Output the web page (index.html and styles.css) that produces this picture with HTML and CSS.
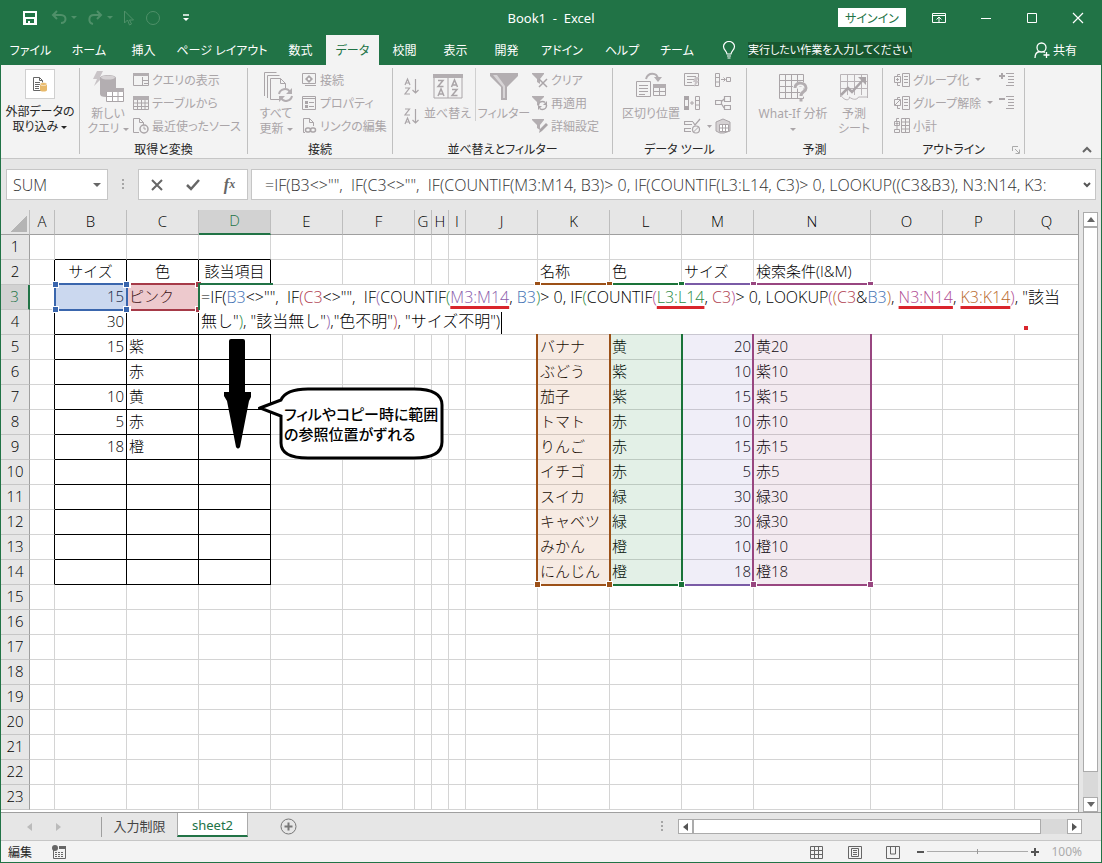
FILE: index.html
```html
<!DOCTYPE html>
<html lang="ja">
<head>
    <meta charset="UTF-8">
    <meta name="viewport" content="width=device-width, initial-scale=1.0">
    <title>Book1 - Excel</title>
    <link rel="stylesheet" href="styles.css">
</head>
<body>
<div class="window">

    <header class="titlebar">
        <div class="quick">
            <button class="save" aria-label="上書き保存"><svg width="14" height="14" viewBox="0 0 14 14"><path d="M0 0h14v14H0zM2 2v4h10V2zM3 8v4h2v-2h2v2h4V8z" fill="#fff" fill-rule="evenodd"/></svg></button>
            <button aria-label="元に戻す"><svg width="26" height="16" viewBox="0 0 26 16"><path d="M6 1L2 5l4 4M2 5h8c6 0 6 8 0 8" fill="none" stroke="#4f9069" stroke-width="2"/><path d="M20 6h6l-3 3z" fill="#4f9069"/></svg></button>
            <button aria-label="やり直し"><svg width="26" height="16" viewBox="0 0 26 16"><path d="M10 1l4 4-4 4M14 5H7c-6 0-6 8-1 9" fill="none" stroke="#4f9069" stroke-width="2"/><path d="M20 6h6l-3 3z" fill="#4f9069"/></svg></button>
            <button aria-label="選択"><svg width="12" height="16" viewBox="0 0 12 16"><path d="M1.500 1v12l3-3 2 5 2-1-2-4h4z" fill="none" stroke="#4f9069"/></svg></button>
            <button aria-label="楕円"><svg width="16" height="16" viewBox="0 0 16 16"><circle cx="8" cy="8" r="6.500" fill="none" stroke="#4f9069"/></svg></button>
            <button aria-label="カスタマイズ"><svg width="8" height="8" viewBox="0 0 8 8"><path d="M1 1h6" stroke="#fff" stroke-width="1.500"/><path d="M1 4h6L4 7z" fill="#fff"/></svg></button>
        </div>
        <div class="title">Book1&nbsp; -&nbsp; Excel</div>
        <div class="window-buttons">
            <button class="signin">サインイン</button>
            <button aria-label="リボンの表示オプション"><svg width="14" height="14" viewBox="0 0 14 14"><path d="M.5 2.500h13v9H.5zM.5 4.500h13M7 11V6M4.500 8.500L7 6l2.500 2.500" fill="none" stroke="#fff"/></svg></button>
            <button aria-label="最小化"><svg width="12" height="12" viewBox="0 0 12 12"><path d="M1 6.500h10" stroke="#fff"/></svg></button>
            <button aria-label="最大化"><svg width="12" height="12" viewBox="0 0 12 12"><path d="M1.500 1.500h9v9h-9z" fill="none" stroke="#fff"/></svg></button>
            <button aria-label="閉じる"><svg width="12" height="12" viewBox="0 0 12 12"><path d="M1 1l10 10M11 1L1 11" stroke="#fff" stroke-width="1.200"/></svg></button>
        </div>
    </header>

    <nav class="tabs">
        <div class="tab-list">
            <button>ファイル</button>
            <button>ホーム</button>
            <button>挿入</button>
            <button>ページ レイアウト</button>
            <button>数式</button>
            <button class="active">データ</button>
            <button>校閲</button>
            <button>表示</button>
            <button>開発</button>
            <button>アドイン</button>
            <button>ヘルプ</button>
            <button>チーム</button>
        </div>
        <button class="tell-me">
            <svg width="14" height="18" viewBox="0 0 14 18"><path d="M5 13c0-3-3.500-4-3.500-7.500a5.500 5 0 0 1 11 0C12.500 9 9 10 9 13zM5 15h4M5.500 17h3" fill="none" stroke="#fff" stroke-width="1.200"/></svg>
            <span>実行したい作業を入力してください</span>
        </button>
        <button class="share">
            <svg width="16" height="17" viewBox="0 0 16 17"><circle cx="7.500" cy="5.500" r="4.500" fill="none" stroke="#fff" stroke-width="1.300"/><path d="M1 16c0-4 2-6 4.500-6.500M9 9.500l2 1M12.500 10v6M9.500 13h6" fill="none" stroke="#fff" stroke-width="1.300"/></svg>
            共有
        </button>
    </nav>

    <section class="ribbon">
        <div class="group g-external">
            <div class="group-body">
                <button class="big enabled">
                    <span class="icon-box"><svg width="16" height="16" viewBox="0 0 16 16"><path d="M1.500 1.500h6l3 3v10h-9z" fill="#fff" stroke="#666"/><path d="M7.500 1.500v3h3M3 6.500h5M3 8.500h5M3 10.500h4M3 12.500h4" fill="none" stroke="#666"/><path d="M8 8v6c0 2 7 2 7 0V8z" fill="#e8b96a"/><ellipse cx="11.500" cy="8" rx="3.500" ry="1.500" fill="#e8b96a" stroke="#fff" stroke-width=".6"/></svg></span>
                    外部データの<br>取り込み <i class="caret"></i>
                </button>
            </div>
        </div>

        <div class="group g-query">
            <div class="group-body">
                <button class="big">
                    <svg width="34" height="34" viewBox="0 0 34 34"><path d="M6 1h6L9 7h3L3 16l3-7H2z" fill="#c9c4c7"/><path d="M9 8c0-4 16-4 16 0v10H15v9c-4 0-6-1-6-3z" fill="#b3aeb1"/><ellipse cx="17" cy="7.500" rx="7" ry="2" fill="#d6d2d4"/><path d="M15.500 18.500h17v13h-17z" fill="#fff" stroke="#aaa5a8"/><path d="M15 18h18v4H15z" fill="#b3aeb1"/><path d="M16 26.500h16M21.500 22v9M27 22v9" stroke="#aaa5a8"/></svg>
                    新しい<br>クエリ <i class="caret"></i>
                </button>
                <div class="stack">
                    <button><svg width="16" height="16" viewBox="0 0 16 16"><path d="M.5 1.500h15v12H.5zM9.500 5v8M9.500 8.500h6M11 11.500h4" fill="none" stroke="#aaa5a8"/><path d="M0 1h16v3H0z" fill="#b3aeb1"/></svg>クエリの表示</button>
                    <button><svg width="16" height="16" viewBox="0 0 16 16"><path d="M.5 1.500h15v13H.5zM.5 8h15M.5 11.500h15M4.500 4v10M8.500 4v10M12 4v10" fill="none" stroke="#aaa5a8"/><path d="M0 1h16v4H0z" fill="#b3aeb1"/></svg>テーブルから</button>
                    <button><svg width="16" height="16" viewBox="0 0 16 16"><path d="M6 14.500H.5V.5h6l4 4V7M6.500.5v4h4" fill="none" stroke="#aaa5a8"/><circle cx="11" cy="11" r="4" fill="#f3f3f3" stroke="#aaa5a8" stroke-width="1.500"/><path d="M11 8.500V11h2" fill="none" stroke="#aaa5a8"/></svg>最近使ったソース</button>
                </div>
            </div>
            <div class="group-label">取得と変換</div>
        </div>

        <div class="group g-connect">
            <div class="group-body">
                <button class="big">
                    <svg width="34" height="34" viewBox="0 0 34 34"><path d="M5.500 26V2.500h12M8.500 28V5.500h12" fill="none" stroke="#aaa5a8"/><path d="M21 29.500h-9.500v-21h10l5 5V18M21.500 8.500v5h5" fill="none" stroke="#aaa5a8"/><path d="M20 24c1-5 8-7 11-2M33 26c-1 5-8 7-11 2" fill="none" stroke="#b3aeb1" stroke-width="2"/><path d="M33 18v6h-6zM20 32v-6h6z" fill="#b3aeb1"/></svg>
                    すべて<br>更新 <i class="caret"></i>
                </button>
                <div class="stack">
                    <button><svg width="16" height="16" viewBox="0 0 16 16"><path d="M1.500 1.500h13v10h-13zM4 13.500h11" fill="none" stroke="#aaa5a8"/><path d="M8 3l4 4-4 4-4-4z" fill="#aaa5a8"/><path d="M8 5.500L9.500 7 8 8.500 6.500 7z" fill="#fff"/></svg>接続</button>
                    <button><svg width="16" height="16" viewBox="0 0 16 16"><path d="M1.500 1.500h13v13h-13zM1.500 3.500h13M8 7.500h5M8 11.500h5" fill="none" stroke="#aaa5a8"/><path d="M4 6h3v3H4zM4 10h3v3H4z" fill="#aaa5a8"/></svg>プロパティ</button>
                    <button><svg width="16" height="16" viewBox="0 0 16 16"><path d="M4 14.500H2.500V.5h6l4 4V8M8.500.5v4h4" fill="none" stroke="#aaa5a8"/><rect x="4.500" y="10" width="5" height="4" rx="2" fill="none" stroke="#aaa5a8" stroke-width="1.500"/><rect x="9.500" y="10" width="5" height="4" rx="2" fill="none" stroke="#aaa5a8" stroke-width="1.500"/></svg>リンクの編集</button>
                </div>
            </div>
            <div class="group-label">接続</div>
        </div>

        <div class="group g-sort">
            <div class="group-body">
                <div class="sort-pair">
                    <button aria-label="昇順"><svg width="16" height="18" viewBox="0 0 16 18"><path d="M1 8l2.500-6L6 8M2 6h3M1 11h4.500L1 17h5M11.500 2v14M8.500 13l3 3 3-3" fill="none" stroke="#aaa5a8" stroke-width="1.200"/></svg></button>
                    <button aria-label="降順"><svg width="16" height="18" viewBox="0 0 16 18"><path d="M1 2h4.500L1 8h5M1 17l2.500-6L6 17M2 15h3M11.500 2v14M8.500 13l3 3 3-3" fill="none" stroke="#aaa5a8" stroke-width="1.200"/></svg></button>
                </div>
                <button class="big sort">
                    <svg width="30" height="34" viewBox="0 0 30 34"><path d="M1 5h28v23H1zM15 8v20" fill="none" stroke="#aaa5a8"/><path d="M0 4h30v4H0z" fill="#b3aeb1"/><path d="M5 10.500h5L5 16.500h5.500M5 26l3-7 3 7M6 24h4M18.500 17l3-7 3 7M19.500 15h4M19 19.500h5l-5 6h5.500" fill="none" stroke="#aaa5a8" stroke-width="1.500"/></svg>
                    並べ替え
                </button>
                <button class="big filter">
                    <svg width="30" height="34" viewBox="0 0 30 34"><path d="M1 3h28v3L18 17v13h-6V17L1 6z" fill="#b3aeb1"/><path d="M4 5h4l8 11v12h-2V17z" fill="#d8d5d7"/></svg>
                    フィルター
                </button>
                <div class="stack">
                    <button><svg width="16" height="16" viewBox="0 0 16 16"><path d="M0 1h12v1L8 7v5L5 10V7L0 2z" fill="#b3aeb1"/><path d="M7 7l8 8M15 7l-8 8" stroke="#aaa5a8" stroke-width="1.500"/></svg>クリア</button>
                    <button><svg width="16" height="16" viewBox="0 0 16 16"><path d="M0 1h12v1L8 6v6L5 10V7L0 2z" fill="#b3aeb1"/><circle cx="10.500" cy="10.500" r="4" fill="#f3f3f3" stroke="#aaa5a8" stroke-width="1.500" stroke-dasharray="9 3"/><path d="M15 6v4h-4zM6 15v-4h4z" fill="#aaa5a8"/></svg>再適用</button>
                    <button><svg width="16" height="16" viewBox="0 0 16 16"><path d="M0 1h12v1L8 7v5L5 10V7L0 2z" fill="#b3aeb1"/><path d="M7 15l1-4 6-6 2 2-6 6z" fill="#aaa5a8"/></svg>詳細設定</button>
                </div>
            </div>
            <div class="group-label">並べ替えとフィルター</div>
        </div>

        <div class="group g-tools">
            <div class="group-body">
                <button class="big">
                    <svg width="32" height="34" viewBox="0 0 32 34"><path d="M1.500 11.500h14v15h-14zM4 15.500h9M4 18.500h9M4 21.500h9M4 24.500h6M18.500 14.500h12v11h-12zM24.500 15v10M19 21.500h11" fill="none" stroke="#aaa5a8"/><path d="M18 14h13v4H18z" fill="#b3aeb1"/><path d="M11 9c2-7 11-7 12 0" fill="none" stroke="#b3aeb1" stroke-width="2"/><path d="M19 7h8l-4 5z" fill="#b3aeb1"/></svg>
                    区切り位置
                </button>
                <div class="stack icons">
                    <button aria-label="フラッシュ フィル"><svg width="16" height="16" viewBox="0 0 16 16"><path d="M.5 1.500h14v12H.5zM3 4.500h9M3 7.500h7M3 10.500h5" fill="none" stroke="#aaa5a8"/><path d="M11 5h4l-2 4h2l-5 6 1-5H9z" fill="#c9c4c7"/></svg></button>
                    <button aria-label="重複の削除"><svg width="16" height="16" viewBox="0 0 16 16"><path d="M0 1h5v4H0zM0 11h5v4H0z" fill="#aaa5a8"/><path d="M.5 1.500h4v13h-4zM11.500 1.500h4v13h-4zM11.500 5.500h4M11.500 10h4M6 8h4M8 6v4" fill="none" stroke="#aaa5a8"/></svg></button>
                    <button aria-label="データの入力規則"><svg width="28" height="16" viewBox="0 0 28 16"><path d="M9 3.500H.5v3H8M7 10.500H.5v3H7M9 4l2 3 5-6" fill="none" stroke="#aaa5a8" stroke-width="1.200"/><circle cx="12" cy="11.500" r="3.500" fill="none" stroke="#aaa5a8" stroke-width="1.200"/><path d="M9.500 14l5-5" stroke="#aaa5a8"/><path d="M23 7h5l-2.500 3z" fill="#aaa5a8"/></svg></button>
                </div>
                <div class="stack icons">
                    <button aria-label="統合"><svg width="16" height="16" viewBox="0 0 16 16"><path d="M.5 1.500h4v13h-4zM.5 5.500h4M.5 10h4M6 7.500h4M8.500 5.500l2 2-2 2M11.500 5.500h4v4h-4z" fill="none" stroke="#aaa5a8"/></svg></button>
                    <button aria-label="リレーションシップ"><svg width="16" height="16" viewBox="0 0 16 16"><path d="M.5 5.500h6v4h-6zM9.500 1.500h6v5h-6zM9.500 10.500h6v4h-6zM6 7l3-3M6 8l3 5" fill="none" stroke="#aaa5a8" stroke-width="1.200"/></svg></button>
                    <button aria-label="データ モデルの管理"><svg width="16" height="16" viewBox="0 0 16 16"><path d="M1 13V4l7-3 7 3v9l-6 2H5z" fill="#d6d2d4" stroke="#aaa5a8"/><path d="M4.500 6.500h9v7h-9zM4.500 10h9M7.500 6.500v7M10.500 6.500v7" fill="#fff" stroke="#aaa5a8"/></svg></button>
                </div>
            </div>
            <div class="group-label">データ ツール</div>
        </div>

        <div class="group g-forecast">
            <div class="group-body">
                <button class="big">
                    <svg width="30" height="34" viewBox="0 0 30 34"><path d="M1.500 4.500h24v24h-24zM7.500 5v23M13.500 5v23M19.500 5v23M2 10.500h23M2 16.500h23M2 22.500h23" fill="none" stroke="#aaa5a8"/><path d="M17 19c0-7 11-6 11 0 0 4-5 3-5 8" fill="none" stroke="#f3f3f3" stroke-width="5"/><path d="M17 18c0-7 11-6 11 0 0 4-5 3-5 8M23 28.500v3" fill="none" stroke="#b3aeb1" stroke-width="3"/></svg>
                    What-If 分析<br><i class="caret"></i>
                </button>
                <button class="big forecast-sheet">
                    <svg width="30" height="34" viewBox="0 0 30 34"><path d="M1.500 27V4.500h27V28M1.500 25c4 6 9 6 9 2 3 3 8 3 9 0h9M8.500 5v20M15.500 5v20M22.500 5v20M2 11.500h26M2 18.500h26" fill="none" stroke="#b9b4b7"/><path d="M2 25l7-7 4 4L24 10" fill="none" stroke="#aaa5a8" stroke-width="2.500"/><path d="M19 7h8v8z" fill="#aaa5a8"/></svg>
                    予測<br>シート
                </button>
            </div>
            <div class="group-label">予測</div>
        </div>

        <div class="group g-outline">
            <div class="group-body">
                <div class="stack">
                    <button><svg width="16" height="16" viewBox="0 0 16 16"><path d="M6 2.500H3.500v2M3.500 11v2.500H6M.5 4.500h6v6h-6zM2 7.500h3M3.500 6v3M8.500 1.500h7v13h-7zM10 4.500h4M10 7.500h4M10 10.500h4" fill="none" stroke="#aaa5a8"/></svg>グループ化 <i class="caret"></i></button>
                    <button><svg width="16" height="16" viewBox="0 0 16 16"><path d="M6 2.500H3.500v2M3.500 11v2.500H6M.5 4.500h6v6h-6zM1 10l5-5M8.500 1.500h7v13h-7zM10 4.500h4M10 7.500h4M10 10.500h4" fill="none" stroke="#aaa5a8"/></svg>グループ解除 <i class="caret"></i></button>
                    <button><svg width="16" height="16" viewBox="0 0 16 16"><path d="M5 .5H2.500v3M.5 3.500h5v4h-5zM1.500 5.500h3M3 4v3M3 8v3M.5 11.500h5v3h-5zM7.500.5h8v14h-8zM11.500 1v14M8 4h7M8 7.500h7M8 11h7" fill="none" stroke="#aaa5a8"/></svg>小計</button>
                </div>
                <div class="stack icons">
                    <button aria-label="詳細データの表示"><svg width="16" height="16" viewBox="0 0 16 16"><path d="M0 4h6M3 1v6" stroke="#aaa5a8" stroke-width="2"/><path d="M7 1.500h8M9 4.500h6M9 7.500h6M9 10.500h6M7 13.500h8" stroke="#aaa5a8"/></svg></button>
                    <button aria-label="詳細を表示しない"><svg width="16" height="16" viewBox="0 0 16 16"><path d="M0 4h6" stroke="#aaa5a8" stroke-width="2"/><path d="M7 1.500h8M9 4.500h6M9 7.500h6M9 10.500h6M7 13.500h8" stroke="#aaa5a8"/></svg></button>
                </div>
            </div>
            <div class="group-label">アウトライン
                <svg class="launcher" width="8" height="8" viewBox="0 0 8 8"><path d="M.5 5V.5H6M3 3l4 4M7.500 3.500v4h-4" fill="none" stroke="#aaa"/></svg>
            </div>
        </div>
        <button class="collapse" aria-label="リボンを折りたたむ"><svg width="10" height="8" viewBox="0 0 10 8"><path d="M1 6l4-4 4 4" fill="none" stroke="#666" stroke-width="2"/></svg></button>
    </section>

    <section class="formula-row">
        <div class="name-box">
            <input type="text" value="SUM" aria-label="名前ボックス">
            <i class="caret"></i>
        </div>
        <span class="dots"></span>
        <div class="formula-buttons">
            <button aria-label="キャンセル"><svg width="12" height="12" viewBox="0 0 12 12"><path d="M1 1l10 10M11 1L1 11" stroke="#666" stroke-width="2"/></svg></button>
            <button aria-label="入力"><svg width="14" height="12" viewBox="0 0 14 12"><path d="M1 6l4 4 8-9" fill="none" stroke="#666" stroke-width="2.500"/></svg></button>
            <button class="fx" aria-label="関数の挿入">f<small>x</small></button>
        </div>
        <div class="formula-box">
            <input type="text" aria-label="数式バー" value='=IF(B3&lt;&gt;"",&nbsp; IF(C3&lt;&gt;"",&nbsp; IF(COUNTIF(M3:M14, B3)&gt; 0, IF(COUNTIF(L3:L14, C3)&gt; 0, LOOKUP((C3&amp;B3), N3:N14, K3:'>
            <svg width="8" height="8" viewBox="0 0 8 8"><path d="M1 2l3 3 3-3" fill="none" stroke="#555" stroke-width="2"/></svg>
        </div>
    </section>

    <main class="workspace">
        <div class="sheet">
            <table>
                <colgroup>
                    <col class="c-head"><col class="c-a"><col><col><col><col><col>
                    <col class="c-thin"><col class="c-thin"><col class="c-thin">
                    <col><col><col><col><col class="c-n"><col><col><col class="c-rest">
                </colgroup>
                <thead><tr id="letters"></tr></thead>
                <tbody id="rows"></tbody>
            </table>

            <div class="range r-b"><b></b><b></b><b></b><b></b></div>
            <div class="range r-c"><b></b><b></b><b></b><b></b></div>
            <div class="range r-m"></div>
            <div class="range r-l"><b></b><b></b><b></b><b></b></div>
            <div class="range r-k"><b></b><b></b><b></b><b></b></div>
            <div class="range r-n"><b></b><b></b><b></b><b></b></div>

            <div class="editor" contenteditable="true" spellcheck="false" role="textbox" aria-label="D3">=IF(<span class="blue">B3</span>&lt;&gt;"",&nbsp; IF<span class="red">(C3</span>&lt;&gt;"",&nbsp; IF<span class="purple">(</span>COUNTIF<span class="green">(</span><span class="purple mark">M3:M14</span>, <span class="blue">B3</span><span class="green">)</span>&gt; 0, IF<span class="green">(</span>COUNTIF<span class="pink">(</span><span class="green mark">L3:L14</span>, <span class="red">C3</span><span class="pink">)</span>&gt; 0, LOOKUP<span class="pink">(</span><span class="brown">(</span><span class="red">C3</span>&amp;<span class="blue">B3</span><span class="brown">)</span>, <span class="pink mark">N3:N14</span>, <span class="brown mark">K3:K14</span><span class="pink">)</span>, "該当<br>無し"<span class="green">)</span>, "該当無し"<span class="purple">)</span>,"色不明"<span class="red">)</span>, "サイズ不明")<span class="cursor"></span></div>
            <span class="pen-dot"></span>

            <svg class="arrow" width="28" height="112" viewBox="0 0 28 112"><path d="M5 3q0-2 2-2h12q2 0 2 2v51h6v5l-2 4-9 46q-2 3-4 0L3 63 0 58v-4h5z"/></svg>
            <div class="callout">
                <svg width="186" height="74" viewBox="0 0 186 74"><path d="M2 21L23 13C26 6 36 2 50 2H156C174 2 184 7 184 18V55C184 66 174 71 156 71H50C32 71 23 66 23 56V29Z" fill="#fff" stroke="#000" stroke-width="3"/></svg>
                <p>フィルやコピー時に範囲<br>の参照位置がずれる</p>
            </div>
        </div>
        <div class="scroll-v">
            <button aria-label="上へ"><svg width="8" height="5" viewBox="0 0 8 5"><path d="M0 5l4-5 4 5z" fill="#666"/></svg></button>
            <span class="thumb"></span>
            <button aria-label="下へ"><svg width="8" height="5" viewBox="0 0 8 5"><path d="M0 0l4 5 4-5z" fill="#666"/></svg></button>
        </div>
    </main>

    <div class="sheet-bar">
        <div class="sheet-nav">
            <button aria-label="前のシート"><svg width="5" height="8" viewBox="0 0 5 8"><path d="M5 0v8L0 4z" fill="#bbb"/></svg></button>
            <button aria-label="次のシート"><svg width="5" height="8" viewBox="0 0 5 8"><path d="M0 0v8l5-4z" fill="#bbb"/></svg></button>
        </div>
        <button class="sheet-tab">入力制限</button>
        <button class="sheet-tab current">sheet2</button>
        <button class="add" aria-label="新しいシート"><svg width="17" height="17" viewBox="0 0 17 17"><circle cx="8.500" cy="8.500" r="7.500" fill="none" stroke="#777"/><path d="M8.500 4.500v8M4.500 8.500h8" stroke="#777" stroke-width="2"/></svg></button>
        <span class="dots"></span>
        <div class="scroll-h">
            <button aria-label="左へ"><svg width="5" height="8" viewBox="0 0 5 8"><path d="M5 0v8L0 4z" fill="#555"/></svg></button>
            <span class="thumb"></span>
            <button aria-label="右へ"><svg width="5" height="8" viewBox="0 0 5 8"><path d="M0 0v8l5-4z" fill="#555"/></svg></button>
        </div>
    </div>

    <footer class="status">
        <span>編集</span>
        <svg class="macro" width="14" height="14" viewBox="0 0 14 14"><path d="M1.500 4v9.500h12v-10H7" fill="none" stroke="#666"/><path d="M7 1h7v3H7z" fill="#666"/><circle cx="3" cy="3" r="3" fill="#666"/><path d="M3 7.500h9M3 9.500h9M3 11.500h9" stroke="#666" stroke-dasharray="2 1"/></svg>
        <div class="views">
            <button aria-label="標準"><svg width="14" height="14" viewBox="0 0 14 14"><path d="M.5 1.500h12v12H.5zM4.500 1v12M8.500 1v12M.5 5.500h12M.5 9.500h12" fill="none" stroke="#666"/></svg></button>
            <button aria-label="ページ レイアウト"><svg width="14" height="14" viewBox="0 0 14 14"><path d="M.5 1.500h13v12H.5zM3.500 3.500h7v8h-7zM5 5.500h4M5 7.500h4M5 9.500h4" fill="none" stroke="#666"/></svg></button>
            <button aria-label="改ページ プレビュー"><svg width="14" height="14" viewBox="0 0 14 14"><path d="M.5 1.500h13v12H.5zM4.500 1v8h5V1" fill="none" stroke="#666"/></svg></button>
        </div>
        <div class="zoom">
            <button aria-label="縮小"><svg width="7" height="8" viewBox="0 0 7 8"><path d="M0 4h7" stroke="#555" stroke-width="2"/></svg></button>
            <input type="range" min="10" max="190" value="100" aria-label="ズーム">
            <button aria-label="拡大"><svg width="8" height="8" viewBox="0 0 8 8"><path d="M0 4h8M4 0v8" stroke="#555" stroke-width="2"/></svg></button>
        </div>
        <span class="percent">100%</span>
    </footer>
</div>
<script src="script.js"></script>
</body>
</html>
```
FILE: styles.css
```css
* {
    box-sizing: border-box;
}
body {
    margin: 0;
    font-family: "Noto Sans", "Noto Sans CJK JP", sans-serif;
    font-size: 12px;
    color: #262626;
    font-feature-settings: "palt";
}
button, input {
    font: inherit;
    font-feature-settings: inherit;
    color: inherit;
    background: none;
    border: none;
    padding: 0;
    margin: 0;
}
button {
    display: inline-flex;
    align-items: center;
    justify-content: center;
    white-space: nowrap;
}
input {
    min-width: 0;
    outline: none;
}
svg {
    flex: none;
    display: block;
}
.window {
    display: flex;
    flex-direction: column;
    height: 100vh;
    border: 1px solid #217346;
    border-top: none;
    background: #e6e6e6;
    overflow: hidden;
}
.caret {
    display: inline-block;
    border: 3px solid transparent;
    border-top-color: currentColor;
    border-bottom: none;
    vertical-align: middle;
}
.dots {
    width: 2px;
    height: 11px;
    background: repeating-linear-gradient(#a6a6a6 0 2px, transparent 2px 4px);
}

/* title bar */
.titlebar {
    display: grid;
    grid-template-columns: 1fr auto 1fr;
    align-items: center;
    height: 35px;
    background: #217346;
    color: #fff;
}
.quick {
    display: flex;
    align-items: center;
    gap: 10px;
    padding-left: 22px;
}
.quick .save {
    margin-right: 4px;
}
.quick button:last-child {
    margin-left: 11px;
}
.title {
    font-size: 13px;
}
.window-buttons {
    display: flex;
    justify-content: flex-end;
    align-items: center;
    gap: 34px;
    padding-right: 17px;
}
.window-buttons .signin {
    width: 68px;
    height: 19px;
    margin-right: -8px;
    background: #fff;
    color: #217346;
}

/* ribbon tabs */
.tabs {
    display: flex;
    height: 30px;
    background: #217346;
    color: #fff;
}
.tab-list {
    display: grid;
    grid-template-columns: 59px 58px 51px 106px 51px 53px 51px 51px 51px 60px 60px 50px;
}
.tab-list .active {
    background: #f3f3f3;
    color: #217346;
}
.tell-me {
    gap: 12px;
    margin-left: 20px;
    font-size: 11px;
}
.tell-me span {
    background: #17572f;
    line-height: 16px;
}
.share {
    gap: 3px;
    margin-left: auto;
    padding-right: 24px;
}

/* ribbon */
.ribbon {
    display: flex;
    height: 94px;
    padding: 3px 0 4px;
    background: #f3f3f3;
    border-bottom: 1px solid #c6c6c6;
}
.group {
    display: flex;
    flex-direction: column;
    border-right: 1px solid #c0c0c0;
}
.group-body {
    display: flex;
    flex: 1;
    min-height: 0;
    color: #aaa5a8;
}
.group-label {
    position: relative;
    height: 14px;
    line-height: 20px;
    text-align: center;
}
.launcher {
    position: absolute;
    right: 4px;
    bottom: 0;
}
.g-external {
    width: 79px;
}
.g-query {
    width: 168px;
}
.g-connect {
    width: 145px;
}
.g-sort {
    width: 220px;
}
.g-tools {
    width: 134px;
}
.g-forecast {
    width: 136px;
}
.g-outline {
    width: 142px;
}
.big {
    display: block;
    flex: none;
    align-self: flex-start;
    padding-top: 2px;
    line-height: 15px;
    text-align: center;
}
.big svg {
    margin: 0 auto 2px;
}
.big.enabled {
    width: 78px;
    color: #262626;
    padding-top: 1px;
}
.icon-box {
    display: flex;
    align-items: center;
    justify-content: center;
    width: 30px;
    height: 30px;
    margin: 0 auto 5px;
    border: 1px solid #d0d0d0;
    background: #fff;
}
.big .icon-box svg {
    margin: 0;
}
.stack {
    display: flex;
    flex-direction: column;
}
.stack button {
    justify-content: flex-start;
    gap: 3px;
    height: 23px;
}
.stack .caret {
    margin-left: 3px;
}
.g-query .big, .g-connect .big {
    width: 44px;
    margin: 0 3px 0 6px;
}
.g-sort .group-body {
    padding-left: 11px;
}
.sort-pair {
    display: flex;
    flex-direction: column;
    gap: 12px;
    padding-top: 9px;
}
.big.sort {
    width: 56px;
    border-right: 1px solid #d0d0d0;
}
.big.filter {
    width: 56px;
}
.g-tools .group-body {
    padding-left: 8px;
}
.g-tools .big {
    width: 60px;
    margin-right: 3px;
}
.g-tools .icons {
    width: 35px;
}
.g-forecast .group-body {
    padding-left: 8px;
}
.g-forecast .big {
    width: 76px;
}
.g-forecast .forecast-sheet {
    width: 46px;
}
.g-outline .stack {
    width: 106px;
    padding-left: 11px;
}
.g-outline .icons {
    width: 30px;
    padding-left: 10px;
}
.collapse {
    align-self: flex-end;
    margin: 0 9px 0 auto;
}

/* formula bar */
.formula-row {
    display: flex;
    align-items: center;
    height: 51px;
    padding: 0 5px;
    color: #333;
    font-family: "Open Sans", "Noto Sans CJK JP", sans-serif;
    font-size: 16px;
    font-weight: 300;
}
.name-box, .formula-buttons, .formula-box {
    display: flex;
    align-items: center;
    height: 31px;
    border: 1px solid #c6c6c6;
    background: #fff;
}
.name-box {
    width: 102px;
    padding: 0 6px;
}
.name-box input {
    flex: 1;
}
.name-box .caret {
    border-width: 4px;
    border-bottom: none;
    color: #666;
}
.formula-row .dots {
    margin: 0 14px;
}
.formula-buttons {
    width: 110px;
    justify-content: space-around;
    margin-right: 3px;
}
.fx {
    font-family: "Liberation Serif", serif;
    font-style: italic;
    font-weight: bold;
    color: #666;
}
.fx small {
    font-size: 12px;
}
.formula-box {
    flex: 1;
    padding: 0 4px 0 13px;
}
.formula-box input {
    flex: 1;
}

/* grid */
.workspace {
    display: flex;
    flex: 1;
    min-height: 0;
}
.sheet {
    position: relative;
    flex: 1;
    overflow: hidden;
    border-right: 1px solid #9f9f9f;
    background: #fff;
    font-family: "Open Sans", "Noto Sans CJK JP", sans-serif;
    font-size: 15px;
    font-weight: 300;
    font-feature-settings: normal;
    color: #000;
}
table {
    width: 100%;
    table-layout: fixed;
    border-collapse: separate;
    border-spacing: 0;
}
col {
    width: 72px;
}
.c-head {
    width: 29px;
}
.c-a {
    width: 25px;
}
.c-thin {
    width: 17px;
}
.c-n {
    width: 117px;
}
.c-rest {
    width: auto;
}
th, td {
    height: 25px;
    padding: 0 2px 2px;
    line-height: 21px;
    border-right: 1px solid #d4d4d4;
    border-bottom: 1px solid #d4d4d4;
    white-space: nowrap;
    text-align: left;
    font-weight: 300;
}
th {
    padding: 0 0 2px;
    background: #e6e6e6;
    text-align: center;
    border-right-color: #bdbdbd;
}
tr > :last-child {
    border-right: none;
}
thead th {
    border-bottom-color: #9f9f9f;
}
tbody th {
    border-right-color: #9f9f9f;
    border-bottom-color: #c6c6c6;
}
thead th.on {
    background: #d2d2d2;
    color: #217346;
    border-bottom: 2px solid #217346;
}
tbody th.on {
    background: #d2d2d2;
    color: #217346;
    border-right: 2px solid #217346;
}
.corner {
    background: linear-gradient(to bottom right, transparent 50%, #b4b4b4 50%) no-repeat 9px 5px / 17px 17px #e6e6e6;
}
.num {
    text-align: right;
}
.mid {
    text-align: center;
}
.line-b {
    border-bottom-color: #000;
}
.line-r {
    border-right-color: #000;
}

/* coloured reference ranges */
.range {
    position: absolute;
    top: 73px;
    height: 303px;
    border: 2px solid;
}
.range b {
    position: absolute;
    width: 5px;
    height: 5px;
    background: currentColor;
    outline: 1px solid #fff;
}
.range b:nth-child(1) {
    top: -3px;
    left: -3px;
}
.range b:nth-child(2) {
    top: -3px;
    right: -3px;
}
.range b:nth-child(3) {
    bottom: -3px;
    left: -3px;
}
.range b:nth-child(4) {
    bottom: -3px;
    right: -3px;
}
.r-b, .r-c {
    height: 28px;
    width: 74px;
}
.r-b {
    left: 53px;
    color: #3a66ad;
    background: rgba(68, 114, 196, .28);
    z-index: 1;
}
.r-c {
    left: 125px;
    color: #a63a48;
    background: rgba(192, 60, 75, .28);
}
.r-k {
    left: 535px;
    width: 75px;
    color: #9c5017;
    background: rgba(190, 100, 40, .13);
}
.r-l {
    left: 608px;
    width: 74px;
    border-left: none;
    color: #1a7339;
    background: rgba(40, 140, 70, .13);
}
.r-m {
    left: 681px;
    width: 71px;
    border-left: none;
    border-right: none;
    color: #7a5ba6;
    background: rgba(120, 100, 190, .11);
}
.r-n {
    left: 751px;
    width: 120px;
    color: #984680;
    background: rgba(150, 60, 120, .11);
}

/* in-cell editor */
.editor {
    position: absolute;
    top: 75px;
    left: 198px;
    right: 0;
    height: 49px;
    padding-left: 2px;
    background: #fff;
    font-size: 16px;
    line-height: 24px;
    white-space: nowrap;
    outline: none;
}
.editor::before {
    content: "";
    position: absolute;
    top: -2px;
    left: -1px;
    width: 73px;
    height: 25px;
    border-top: 2px solid #217346;
    border-left: 2px solid #217346;
}
.blue {
    color: #4472b4;
}
.red {
    color: #b04050;
}
.purple {
    color: #8a5cab;
}
.green {
    color: #2c8a45;
}
.pink {
    color: #b04c92;
}
.brown {
    color: #b8682c;
}
.mark {
    text-decoration: underline 3px #d9252c;
    text-underline-offset: 3px;
}
.cursor {
    display: inline-block;
    width: 1px;
    height: 22px;
    margin-left: 1px;
    background: #000;
    vertical-align: middle;
}
.pen-dot {
    position: absolute;
    top: 116px;
    left: 1023px;
    width: 4px;
    height: 4px;
    background: #d9252c;
}
.arrow {
    position: absolute;
    top: 128px;
    left: 223px;
}
.callout {
    position: absolute;
    top: 177px;
    left: 257px;
}
.callout p {
    position: absolute;
    top: 17px;
    left: 26px;
    margin: 0;
    font-size: 15px;
    font-weight: 500;
    line-height: 20px;
    font-feature-settings: "palt";
    white-space: nowrap;
}

/* scroll bars */
.scroll-v {
    display: flex;
    flex-direction: column;
    width: 15px;
    margin: 2px 3px 0 4px;
    background: #d9d9d9;
}
.scroll-v button, .scroll-h button {
    width: 15px;
    height: 15px;
    border: 1px solid #ababab;
    background: #fff;
}
.thumb {
    flex: 1;
    border: 1px solid #ababab;
    background: #fff;
}
.scroll-v .thumb {
    margin-bottom: 25px;
}
.scroll-h .thumb {
    margin-right: 26px;
}

/* sheet tabs */
.sheet-bar {
    display: flex;
    align-items: center;
    height: 28px;
    border-top: 1px solid #9f9f9f;
    font-size: 13px;
    color: #444;
}
.sheet-nav {
    display: flex;
    gap: 24px;
    width: 101px;
    height: 20px;
    padding-left: 26px;
    border-right: 1px solid #9f9f9f;
}
.sheet-tab {
    width: 75px;
    height: 24px;
    align-self: flex-start;
}
.sheet-tab.current {
    width: 71px;
    height: 24px;
    padding-top: 2px;
    border: 1px solid #ababab;
    border-top: none;
    border-bottom: 2px solid #217346;
    background: #fff;
    color: #217346;
}
.add {
    margin-left: 32px;
}
.sheet-bar .dots {
    margin-left: auto;
    margin-right: 15px;
}
.scroll-h {
    display: flex;
    width: 404px;
    margin-right: 19px;
    background: #d9d9d9;
}

/* status bar */
.status {
    display: flex;
    align-items: center;
    height: 22px;
    padding: 0 19px 0 7px;
    border-top: 1px solid #c6c6c6;
    background: #f3f3f3;
}
.macro {
    margin-left: 20px;
}
.views {
    display: flex;
    gap: 24px;
    margin-left: auto;
}
.zoom {
    display: flex;
    align-items: center;
    gap: 3px;
    margin: 0 12px 0 17px;
}
.zoom input {
    appearance: none;
    width: 101px;
    height: 9px;
    background: linear-gradient(#ababab, #ababab) no-repeat center / 100% 1px;
}
.zoom input::-webkit-slider-thumb {
    appearance: none;
    width: 1px;
    height: 5px;
    background: #999;
}
.percent {
    color: #ababab;
}
```
FILE: script.js
```js
const letters = 'ABCDEFGHIJKLMNOPQ'.split('');
const rowCount = 23;

const cells = {
    B2: 'サイズ', C2: '色', D2: '該当項目',
    B3: 15, C3: 'ピンク',
    B4: 30,
    B5: 15, C5: '紫',
    C6: '赤',
    B7: 10, C7: '黄',
    B8: 5, C8: '赤',
    B9: 18, C9: '橙',
    K2: '名称', L2: '色', M2: 'サイズ', N2: '検索条件(I&M)'
};

const items = [
    ['バナナ', '黄', 20],
    ['ぶどう', '紫', 10],
    ['茄子', '紫', 15],
    ['トマト', '赤', 10],
    ['りんご', '赤', 15],
    ['イチゴ', '赤', 5],
    ['スイカ', '緑', 30],
    ['キャベツ', '緑', 30],
    ['みかん', '橙', 10],
    ['にんじん', '橙', 18]
];
items.forEach(([name, color, size], i) => {
    const row = i + 5;
    cells['K' + row] = name;
    cells['L' + row] = color;
    cells['M' + row] = size;
    cells['N' + row] = color + size;
});

function addCell(row, tag, text, className) {
    const cell = document.createElement(tag);
    cell.textContent = text;
    if (className) cell.className = className;
    row.appendChild(cell);
}

const head = document.getElementById('letters');
addCell(head, 'th', '', 'corner');
letters.forEach(letter => addCell(head, 'th', letter, letter === 'D' ? 'on' : ''));

const body = document.getElementById('rows');
for (let r = 1; r <= rowCount; r++) {
    const row = document.createElement('tr');
    addCell(row, 'th', r, r === 3 ? 'on' : '');
    letters.forEach(letter => {
        const value = cells[letter + r] ?? '';
        const classes = [];
        if (typeof value === 'number') classes.push('num');
        // B2:D14 has black borders
        if ('BCD'.includes(letter)) {
            if (r === 2) classes.push('mid');
            if (r >= 1 && r <= 14) classes.push('line-b');
        }
        if ('ABCD'.includes(letter) && r >= 2 && r <= 14) classes.push('line-r');
        addCell(row, 'td', value, classes.join(' '));
    });
    body.appendChild(row);
}
```
